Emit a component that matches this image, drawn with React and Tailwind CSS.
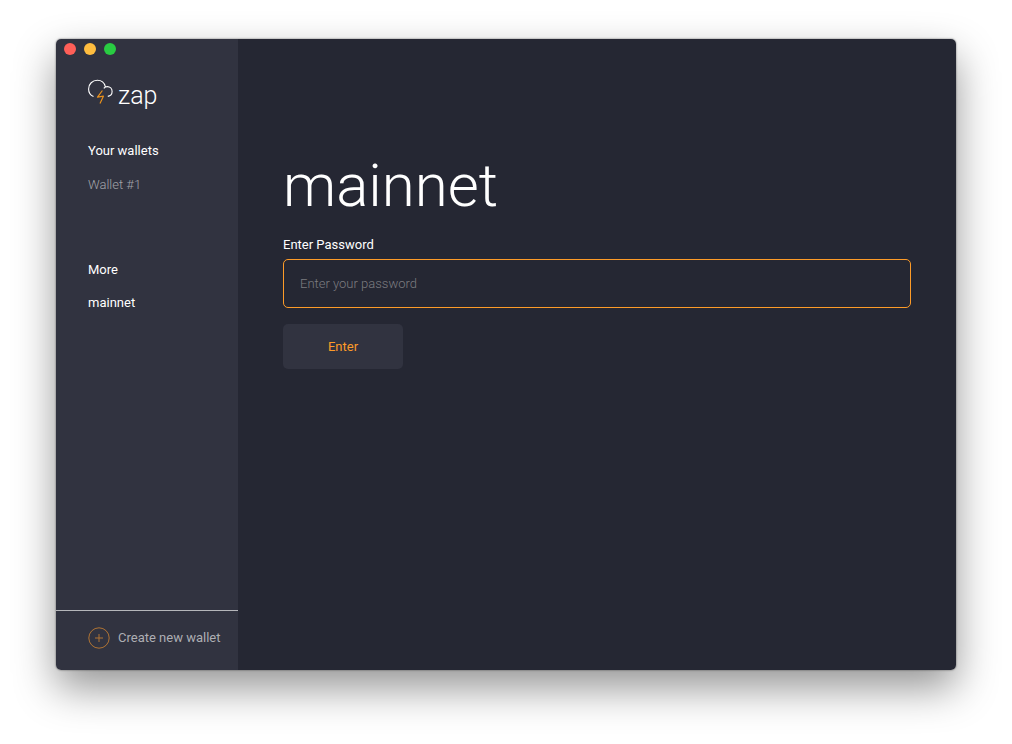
function Logo() {
  return (
    <div className="flex h-8 items-start text-white">
      <svg width="26" height="28" viewBox="0 0 26 28" fill="none" aria-hidden="true">
        <path
          d="M5.500 17.500C2.500 16.200.6 13.300.6 9.900A8.700 8.700 0 0 1 9.300 1.200c3.900 0 7.100 2.600 8 6.400M15.800 9.300c.9-1.100 2.100-1.700 3.500-1.700 2.700 0 4.800 2.100 4.800 4.900 0 2.500-1.700 4.500-4.300 4.900"
          stroke="currentColor"
          strokeWidth="1.100"
        />
        <path d="M14.400 11.500 9.500 18.200l5.900-1-3.400 7.300" stroke="#e8901c" strokeWidth="1.200" strokeLinejoin="round" />
      </svg>
      <span className="pl-1 text-[25px] leading-[34px] font-light">zap</span>
    </div>
  );
}

function Lights() {
  return (
    <div className="flex h-5 items-center gap-2 pl-2" aria-hidden="true">
      <span className="h-3 w-3 rounded-full bg-[#ff5f58]" />
      <span className="h-3 w-3 rounded-full bg-[#ffbd3f]" />
      <span className="h-3 w-3 rounded-full bg-[#29cc42]" />
    </div>
  );
}

function Sidebar() {
  return (
    <aside className="flex w-[182px] shrink-0 flex-col bg-[#313340]">
      <Lights />
      <div className="px-8 pt-5">
        <Logo />
      </div>
      <nav className="flex grow flex-col px-8 pt-[30px] text-[13px] leading-5">
        <h2>Your wallets</h2>
        <a href="#wallet-1" className="pt-[14px] font-light text-[#a3a4aa]">Wallet #1</a>
        <h2 className="pt-[65px]">More</h2>
        <a href="#mainnet" className="pt-[13px]">mainnet</a>
      </nav>
      <div className="border-t border-[#b5b6ba] px-8 pt-4 pb-[21px]">
        <button type="button" className="flex items-center gap-2 text-[13px] leading-[22px] whitespace-nowrap text-[#adaeb3]">
          <svg width="22" height="22" viewBox="0 0 22 22" fill="none" stroke="#b07434" aria-hidden="true">
            <circle cx="11" cy="11" r="10.200" />
            <path d="M7 11h8M11 7v8" />
          </svg>
          Create new wallet
        </button>
      </div>
    </aside>
  );
}

export default function App() {
  return (
    <div className="flex min-h-screen bg-white px-14 pt-[39px] pb-[74px] font-['Roboto',sans-serif] text-white">
      <div className="flex grow overflow-hidden rounded-[5px] shadow-[0_0_2px_rgba(0,0,0,0.6),0_18px_42px_rgba(0,0,0,0.42)]">
        <Sidebar />
        <main className="grow bg-[#252733] px-[45px] pt-28">
          <h1 className="text-[60px] leading-[70px] font-light">mainnet</h1>
          <form className="flex flex-col items-start pt-[14px]" onSubmit={(e) => e.preventDefault()}>
            <label htmlFor="password" className="text-[13px] leading-5">Enter Password</label>
            <input
              id="password"
              type="password"
              placeholder="Enter your password"
              className="mt-1 h-[49px] w-full rounded-[5px] border border-[#fd9b28] bg-transparent px-4 text-[13px] font-light outline-none placeholder:text-[#7c7c80]"
            />
            <button type="submit" className="mt-4 h-[45px] w-[120px] rounded-[5px] bg-[#313340] text-[13px] text-[#fd9b28]">
              Enter
            </button>
          </form>
        </main>
      </div>
    </div>
  );
}
